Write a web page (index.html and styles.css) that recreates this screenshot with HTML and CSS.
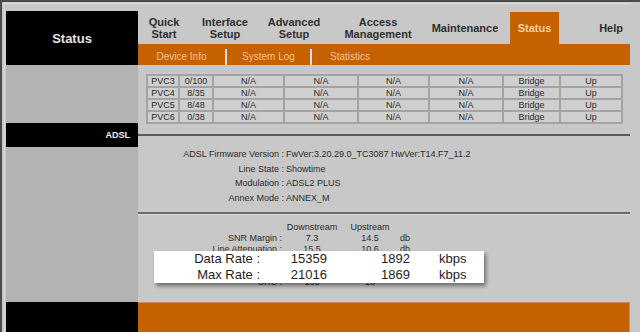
FILE: index.html
```html
<!DOCTYPE html>
<html lang="en">
<head>
  <meta charset="UTF-8" />
  <title>Status - ADSL</title>
  <link rel="stylesheet" href="styles.css">
</head>
<body>
  <div class="frame">
    <div class="page">
      <div class="brand">Status</div>

      <div class="menus">
        <div class="nav">
          <a class="w1">Quick<br>Start</a>
          <a class="w2">Interface<br>Setup</a>
          <a class="w3">Advanced<br>Setup</a>
          <a class="w4">Access<br>Management</a>
          <a class="w5">Maintenance</a>
          <a class="on">Status</a>
          <a class="help">Help</a>
        </div>
        <div class="subnav">
          <a class="s1">Device Info</a>
          <span class="sep"></span>
          <a class="s2">System Log</a>
          <span class="sep"></span>
          <a class="s3">Statistics</a>
        </div>
      </div>

      <div class="side"></div>
      <div class="pvc-area">
        <table class="pvc">
          <colgroup>
            <col style="width:32px"><col style="width:34px"><col style="width:71px"><col style="width:74px">
            <col style="width:71px"><col style="width:74px"><col style="width:57px"><col style="width:62px">
          </colgroup>
          <tr><td>PVC3</td><td>0/100</td><td>N/A</td><td>N/A</td><td>N/A</td><td>N/A</td><td>Bridge</td><td>Up</td></tr>
          <tr><td>PVC4</td><td>8/35</td><td>N/A</td><td>N/A</td><td>N/A</td><td>N/A</td><td>Bridge</td><td>Up</td></tr>
          <tr><td>PVC5</td><td>8/48</td><td>N/A</td><td>N/A</td><td>N/A</td><td>N/A</td><td>Bridge</td><td>Up</td></tr>
          <tr><td>PVC6</td><td>0/38</td><td>N/A</td><td>N/A</td><td>N/A</td><td>N/A</td><td>Bridge</td><td>Up</td></tr>
        </table>
      </div>

      <div class="side-title">ADSL</div>
      <div class="title-rule"><div class="line"></div></div>

      <div class="side"></div>
      <div class="adsl">
        <div class="info">
          <span class="lbl">ADSL Firmware Version :</span><span>FwVer:3.20.29.0_TC3087 HwVer:T14.F7_11.2</span>
          <span class="lbl">Line State :</span><span>Showtime</span>
          <span class="lbl">Modulation :</span><span>ADSL2 PLUS</span>
          <span class="lbl">Annex Mode :</span><span>ANNEX_M</span>
        </div>

        <div class="rule"></div>

        <div class="stats">
          <span></span><span class="c">Downstream</span><span class="c">Upstream</span><span></span>
          <span class="lbl">SNR Margin :</span><span class="c">7.3</span><span class="c">14.5</span><span>db</span>
          <span class="lbl">Line Attenuation :</span><span class="c">15.5</span><span class="c">10.6</span><span>db</span>
          <span class="lbl under">Data Rate :</span><span class="c under">15359</span><span class="c under">1892</span><span class="under">kbps</span>
          <span class="lbl under">Max Rate :</span><span class="c under">21016</span><span class="c under">1869</span><span class="under">kbps</span>
          <span class="lbl">CRC :</span><span class="c">165</span><span class="c">16</span><span></span>
        </div>

        <!-- highlight box laid over the rate rows -->
        <div class="popup">
          <span class="lbl">Data Rate :</span><span class="num">15359</span><span class="num">1892</span><span class="unit">kbps</span>
          <span class="lbl">Max Rate :</span><span class="num">21016</span><span class="num">1869</span><span class="unit">kbps</span>
        </div>
      </div>

      <div class="side-foot"></div>
      <div class="foot"></div>
    </div>
  </div>
</body>
</html>
```

FILE: styles.css
```css
body {
  margin: 0;
  height: 330px;
  overflow: hidden;
  background-color: #c8c8c8;
  color: #2a2a2a;
  font-family: "Liberation Sans", Arial, sans-serif;
  border-top: 2px solid #4b4b4b;
  border-left: 2px solid #4b4b4b;
}

.frame {
  width: 625px;
  margin: 1px 0 0 2px;
  padding: 7px 0 0 1px;
  border-top: 1px solid #e2e2e2;
  border-left: 1px solid #dadada;
}

.page {
  display: grid;
  grid-template-columns: 132px 492px;
  grid-template-rows: 54px 58px 24px 155px 30px;
}

.brand {
  background: #000;
  color: #e4e4e4;
  font-size: 13px;
  font-weight: bold;
  display: flex;
  align-items: center;
  justify-content: center;
}

.menus {
  display: flex;
  flex-direction: column;
}

.nav {
  height: 33px;
  display: flex;
}

.nav a {
  display: flex;
  align-items: center;
  justify-content: center;
  text-align: center;
  font-size: 11px;
  line-height: 12px;
  font-weight: bold;
  color: #2f2f2f;
}

.nav .w1 { width: 52px; }
.nav .w2 { width: 70px; }
.nav .w3 { width: 68px; }
.nav .w4 { width: 100px; }
.nav .w5 { width: 74px; }

.nav .on {
  width: 49px;
  margin: 1px 0 0 8px;
  background: #c66100;
  color: #f6d2ab;
}

.nav .help {
  flex: 1;
  justify-content: flex-end;
  padding-right: 7px;
}

.subnav {
  height: 21px;
  display: flex;
  background: #c66100;
}

.subnav a {
  padding-top: 5px;
  line-height: 16px;
  font-size: 10px;
  color: #f4c396;
  text-align: center;
}

.subnav .s1 { width: 87px; }
.subnav .s2 { width: 83px; }
.subnav .s3 { padding-left: 18px; }

.subnav .sep {
  width: 2px;
  margin-top: 5px;
  background: #e2e2e2;
}

.side {
  background: #b3b3b3;
}

.pvc-area {
  padding: 9px 0 0 8px;
}

.pvc {
  table-layout: fixed;
  border-collapse: collapse;
  width: 475px;
  font-size: 9px;
}

.pvc td {
  height: 10px;
  padding: 0;
  line-height: 10px;
  text-align: center;
  background: #cfcfcf;
  border: 2px solid #a3a3a3;
  color: #2a2a2a;
}

.side-title {
  background: #000;
  color: #f2f2f2;
  font-size: 9px;
  font-weight: bold;
  display: flex;
  align-items: center;
  justify-content: flex-end;
  padding-right: 8px;
}

.title-rule {
  display: flex;
  align-items: center;
}

.title-rule .line {
  width: 100%;
  height: 2px;
  background: #5a5a5a;
}

.adsl {
  position: relative;
  font-size: 9px;
}

.info {
  display: grid;
  grid-template-columns: 146px 1fr;
  line-height: 14.5px;
}

.lbl {
  text-align: right;
}

.info .lbl + span {
  padding-left: 2px;
}

.rule {
  height: 2px;
  margin-top: 7px;
  background: #6b6b6b;
  border-bottom: 1px solid #d8d8d8;
}

.stats {
  display: grid;
  grid-template-columns: 146px 56px 60px 40px;
  margin-top: 7px;
  line-height: 11px;
}

.stats .lbl {
  padding-right: 2px;
}

.stats .c {
  text-align: center;
}

/* rows fully covered by the popup */
.stats .under {
  visibility: hidden;
}

.popup {
  position: absolute;
  top: 104px;
  left: 16px;
  width: 330px;
  height: 32px;
  display: grid;
  grid-template-columns: 106px 67px 83px 1fr;
  background: #fff;
  color: #1e1e1e;
  font-size: 13px;
  line-height: 16px;
  box-shadow: 2px 3px 4px rgba(0, 0, 0, 0.45);
}

.popup .num {
  text-align: right;
}

.popup .unit {
  padding-left: 29px;
}

.side-foot {
  background: #000;
}

.foot {
  background: #c66100;
  border-top: 1px solid #d58b50;
  border-right: 1px solid #d58b50;
}
```
